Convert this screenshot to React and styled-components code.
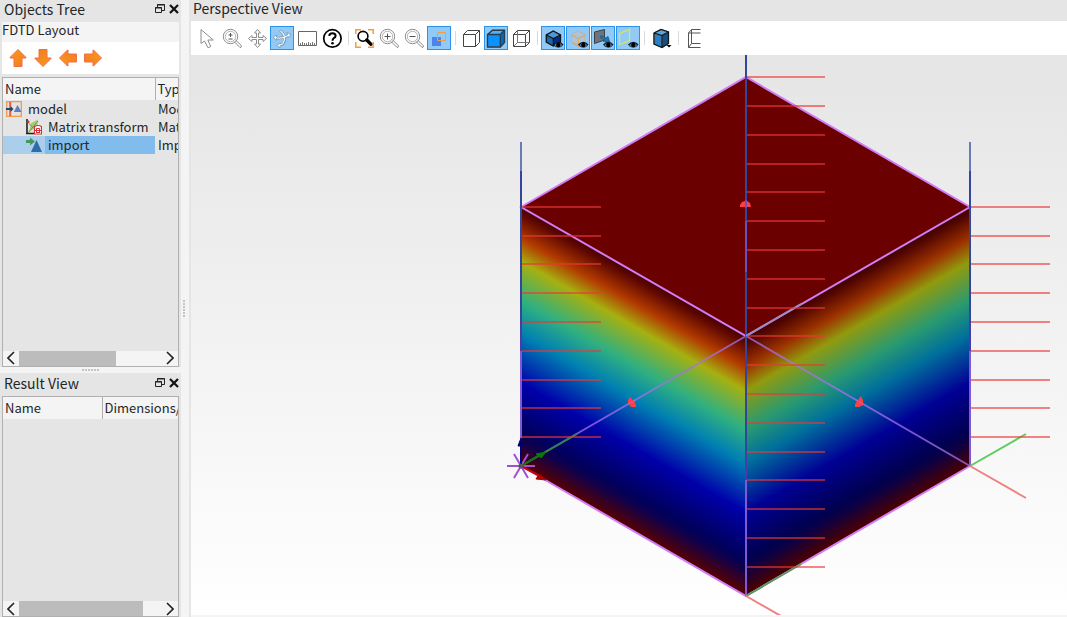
import { useState } from "react";
import styled, { createGlobalStyle } from "styled-components";

const GlobalStyle = createGlobalStyle`
    * {
        box-sizing: border-box;
    }
    body {
        margin: 0;
        background: #f4f4f4;
        color: #232627;
        font-family: "Noto Sans CJK SC", "Noto Sans", sans-serif;
        font-size: 13px;
    }
    button {
        font: inherit;
        color: inherit;
    }
`

/* ---------- icons ---------- */

const Arrow = ({ angle }) => (
    <svg width="20" height="20" viewBox="0 0 20 20">
        <path d="M10 1.5L18 9.5V10H14V18.5H6V10H2V9.5Z" fill="url(#orange)" stroke="#ee6f4c" strokeLinejoin="round" transform={`rotate(${angle} 10 10)`} />
    </svg>
)

const Icon = ({ children }) => (
    <svg width="24" height="24" viewBox="0 0 24 24" fill="none" stroke="#8c8c8c" strokeWidth="1">
        {children}
    </svg>
)

const Lens = ({ children }) => (
    <Icon>
        <circle cx="10.5" cy="10.5" r="7.2" />
        <circle cx="10.5" cy="10.5" r="5.2" stroke="#b4b4b4" />
        <path d="M15.5 14L21.3 19.5Q22 21.5 20 21.5L14 15.5" />
        {children}
    </Icon>
)

const Eye = () => (
    <g stroke="none">
        <path d="M12.5 19Q17.5 13.8 22 19Q17.5 23 12.5 19Z" fill="#5d8fb5" />
        <path d="M12.5 19Q17.5 13.8 22 19" stroke="#0b1620" strokeWidth="1.4" fill="none" />
        <path d="M13 19.5Q17.5 22.8 21.5 19.5" stroke="#1a3040" strokeWidth="1" fill="none" />
        <circle cx="17.3" cy="19" r="2.2" fill="#000" />
    </g>
)

const icons = {
    pointer: (
        <Icon><path d="M6 3.5V17.5L9.5 15L13 21.8L15.8 20.5L12.8 14H18.3Z" /></Icon>
    ),
    zoom: (
        <Lens><path d="M8.5 9H12.5M10.5 7V11M8.5 13H12.5" stroke="#555" /></Lens>
    ),
    pan: (
        <Icon>
            <path d="M12.5 3.5L15.5 7H13.5V11.5H18V9.5L21.5 12.5L18 15.5V13.5H13.5V18H15.5L12.5 21.5L9.5 18H11.5V13.5H7V15.5L3.5 12.5L7 9.5V11.5H11.5V7H9.5Z" />
        </Icon>
    ),
    rotate: (
        <Icon>
            <g fill="none" stroke="#8296a4" strokeWidth="2.6">
                <path d="M10 4.5Q18 11 13 18L9 19.5M4.5 11.5Q12 13.5 19 9" />
            </g>
            <path d="M10.5 17L6.5 19.5L10 21.8ZM17 6.5L21 8.5L18 12ZM6.5 8.8L3 11.3L6.5 14.2Z" fill="#eaf4fc" stroke="#8296a4" strokeWidth="0.8" />
            <g fill="none" stroke="#eaf4fc" strokeWidth="1.2">
                <path d="M10.4 4.8Q17.6 11 12.8 17.7L9 19.3M5 11.5Q12 13.4 18.6 9.2" />
            </g>
        </Icon>
    ),
    ruler: (
        <Icon>
            <path d="M3.5 5.5H21.5V19.5H3.5Z" stroke="#666" />
            <path d="M5.5 19V17M7.5 19V16M9.5 19V17M11.5 19V17M13.5 19V16M15.5 19V17M17.5 19V16M19.5 19V17" stroke="#777" />
        </Icon>
    ),
    help: (
        <Icon>
            <circle cx="12.4" cy="12.4" r="8.7" stroke="#000" strokeWidth="1.7" />
            <path d="M9.2 9.8Q9.4 7.2 12.4 7.2Q15.6 7.2 15.6 9.7Q15.6 11.2 13.8 12.2Q12.5 13 12.5 14.8" stroke="#000" strokeWidth="2" />
            <circle cx="12.5" cy="17.3" r="1.3" fill="#000" stroke="none" />
        </Icon>
    ),
    extent: (
        <Icon>
            <path d="M3.8 8V3.8H9M16 3.8H21.2V8M21.2 16V21.2H16M9 21.2H3.8V16" stroke="#f0a040" strokeWidth="1.5" />
            <circle cx="11" cy="10.3" r="4.9" stroke="#000" strokeWidth="1.6" />
            <path d="M14.8 14L18.8 18.2" stroke="#000" strokeWidth="3.4" strokeLinecap="round" />
        </Icon>
    ),
    zoomIn: (
        <Lens><path d="M7.5 10.5H13.5M10.5 7.5V13.5" stroke="#555" /></Lens>
    ),
    zoomOut: (
        <Lens><path d="M7.5 10.5H13.5" stroke="#555" /></Lens>
    ),
    overlap: (
        <Icon>
            <path d="M5 11H14V20H5Z" fill="#4d83ec" stroke="none" />
            <path d="M10.5 6.5H18.5V14.5H10.5Z" stroke="#eda045" />
        </Icon>
    ),
    boxHidden: (
        <Icon><path d="M4.5 8.5H16.5V20.5H4.5ZM4.5 8.5L8.5 4.5H20.5V16.5L16.5 20.5M16.5 8.5L20.5 4.5" stroke="#444" /></Icon>
    ),
    boxSolid: (
        <Icon>
            <path d="M3.5 8.5L8.5 4.3H20.5V16.5L16.3 21H3.5Z" fill="#0a93ff" />
            <path d="M16.3 8.5L20.5 4.3V16.5L16.3 21Z" fill="#076ab8" />
            <path d="M3.5 8.5L8.5 4.3H20.5L16.3 8.5Z" fill="#55aef0" />
            <path d="M3.5 8.5H16.3V21H3.5ZM3.5 8.5L8.5 4.3H20.5V16.5L16.3 21M16.3 8.5L20.5 4.3" stroke="#263f55" strokeWidth="1.4" />
        </Icon>
    ),
    boxWire: (
        <Icon>
            <path d="M4.5 8.5H16.5V20.5H4.5ZM4.5 8.5L8.5 4.5H20.5V16.5L16.5 20.5M16.5 8.5L20.5 4.5" stroke="#444" />
            <path d="M8.5 4.5V16.5H20.5M8.5 16.5L4.5 20.5" stroke="#777" />
        </Icon>
    ),
    showSolid: (
        <Icon>
            <path d="M12.3 5L19.5 9V16L12.3 20L5.3 16V9Z" fill="#1769ae" />
            <path d="M12.3 5L19.5 9L12.3 12.5L5.3 9Z" fill="#4a9ad8" />
            <path d="M19.5 9V16L12.3 20V12.5Z" fill="#062b86" />
            <path d="M12.3 5L19.5 9V16L12.3 20L5.3 16V9ZM5.3 9L12.3 12.5L19.5 9M12.3 12.5V20" stroke="#07131f" strokeWidth="1.3" />
            <Eye />
        </Icon>
    ),
    showMesh: (
        <Icon>
            <path d="M12.3 5L19 8.5V16L12.3 20L5.5 16V8.5Z" fill="#a9c6da" stroke="#ccb090" />
            <path d="M5.5 9L12.3 12.5L19 9M12.3 12.5V20L6 16.5" stroke="#e2a468" strokeWidth="1.2" />
            <Eye />
        </Icon>
    ),
    showSource: (
        <Icon>
            <path d="M3.5 6L13.5 3.5V14L3.5 17.5Z" fill="#6d757b" stroke="#3b4248" />
            <path d="M10 9.5L15 12L17 10.5L19 17L12.5 15.5L13.5 14L9 11.5Z" fill="#2374ae" stroke="#1c5b8d" strokeWidth="0.8" />
            <Eye />
        </Icon>
    ),
    showMonitor: (
        <Icon>
            <path d="M3.5 7.5L13.5 3.5V14.5L3.5 18.5Z" stroke="#dfe650" strokeWidth="1.3" />
            <Eye />
        </Icon>
    ),
    cube: (
        <Icon>
            <path d="M5 7L12 3.5L19.5 6V17.5L13 21.5L5 18Z" fill="#2f80c2" />
            <path d="M5 7L12 3.5L19.5 6L13 9.5Z" fill="#57a5da" />
            <path d="M13 9.5L19.5 6V17.5L13 21.5Z" fill="#174f80" />
            <path d="M5 7L12 3.5L19.5 6V17.5L13 21.5L5 18ZM5 7L13 9.5L19.5 6M13 9.5V21.5" stroke="#0b1722" strokeWidth="1.3" />
            <path d="M17.5 19H22.5L20 21.5Z" fill="#000" stroke="none" />
        </Icon>
    ),
    clip: (
        <Icon><path d="M18.5 3.5H9.5L6.5 7V21.5H18.5M9.5 3.5V17.5H18.5M6.5 7H18.5M6.5 21.5L9.5 17.5" stroke="#555" /></Icon>
    ),
}

const ModelIcon = () => (
    <svg width="16" height="16" viewBox="0 0 16 16">
        <path d="M.7.7H15.3V15.3H.7Z" fill="#e5e2df" stroke="#f09a52" strokeWidth="1.3" />
        <path d="M4.2 1V15" stroke="#ee5a3a" strokeWidth="2" />
        <path d="M0 8H6" stroke="#174a75" strokeWidth="2" />
        <path d="M4.5 5L7.5 8L4.5 11Z" fill="#174a75" />
        <path d="M11.5 4L15.5 11H7.8Z" fill="#5d7fc0" />
    </svg>
)

const MatrixIcon = () => (
    <svg width="16" height="16" viewBox="0 0 16 16" fill="none">
        <path d="M3 13L5 4L12 .5L11 8Z" fill="#a4cf75" />
        <path d="M1 0V15M0 14.5H8" stroke="#222" strokeWidth="1.6" />
        <path d="M1 2L7 9M2 14L12 2" stroke="#5a8c3a" strokeWidth="0.8" />
        <path d="M2 1L4 3L2 4Z" fill="#d82b2b" />
        <path d="M8.5 15V7.5Q12 5.5 15.5 7.5V15Z" fill="#fff" stroke="#d0323c" strokeWidth="1.2" />
        <path d="M10.5 14V9.5H13.5V14M8 11.5H15M10.5 13.5H13.5" stroke="#d0323c" />
    </svg>
)

const ImportIcon = () => (
    <svg width="16" height="16" viewBox="0 0 16 16">
        <path d="M10.5 3L16 15H5Z" fill="#2d6eaa" />
        <path d="M0 3H4V.5L9 4.5L4 8.5V6H0Z" fill="#459665" />
    </svg>
)

/* ---------- dock panels ---------- */

function PanelTitle({ title, tall }){
    return(
        <TitleBar $tall={tall}>
            <h2>{title}</h2>
            <TitleButton aria-label="Float">
                <svg width="10" height="10" viewBox="0 0 10 10" fill="none" stroke="#222">
                    <path d="M.5 3.5H6.5V8.5H.5ZM2.5 3V.5H9.5V6.5H7" />
                    <path d="M0 4H7M2 1H10" />
                </svg>
            </TitleButton>
            <TitleButton aria-label="Close">
                <svg width="10" height="10" viewBox="0 0 10 10" stroke="#111" strokeWidth="2.2">
                    <path d="M1 1L9 9M9 1L1 9" />
                </svg>
            </TitleButton>
        </TitleBar>
    )
}

function ScrollBar({ thumb }){
    return(
        <Scroll>
            <ScrollButton aria-label="Scroll left">
                <svg width="8" height="14" viewBox="0 0 8 14" fill="none" stroke="#222" strokeWidth="1.6"><path d="M7 1L1 7L7 13" /></svg>
            </ScrollButton>
            <Track><Thumb $size={thumb} /></Track>
            <ScrollButton aria-label="Scroll right">
                <svg width="8" height="14" viewBox="0 0 8 14" fill="none" stroke="#222" strokeWidth="1.6"><path d="M1 1L7 7L1 13" /></svg>
            </ScrollButton>
        </Scroll>
    )
}

const objects = [
    { name: "model", type: "Model", depth: 0, icon: <ModelIcon /> },
    { name: "Matrix transform", type: "Matrix transform", depth: 1, icon: <MatrixIcon /> },
    { name: "import", type: "Import", depth: 1, icon: <ImportIcon /> },
]

function ObjectsTree(){
    const [selected, setSelected] = useState("import");

    return(
        <Panel $grow={3}>
            <PanelTitle title="Objects Tree" />
            <Context>FDTD Layout</Context>
            <ArrowBar>
                <button aria-label="Move up"><Arrow angle={0} /></button>
                <button aria-label="Move down"><Arrow angle={180} /></button>
                <button aria-label="Move left"><Arrow angle={270} /></button>
                <button aria-label="Move right"><Arrow angle={90} /></button>
            </ArrowBar>
            <Frame>
                <TableArea>
                    <Table $first={152}>
                        <thead>
                            <tr><th>Name</th><th>Type</th></tr>
                        </thead>
                        <tbody>
                            {objects.map(item => (
                                <Row key={item.name} $selected={item.name === selected} onClick={() => setSelected(item.name)}>
                                    <td>
                                        <Cell>
                                            <Branch $depth={item.depth}>{item.icon}</Branch>
                                            <Label>{item.name}</Label>
                                        </Cell>
                                    </td>
                                    <td>{item.type}</td>
                                </Row>
                            ))}
                        </tbody>
                    </Table>
                </TableArea>
                <ScrollBar thumb={68} />
            </Frame>
        </Panel>
    )
}

function ResultView(){
    return(
        <Panel $grow={2}>
            <PanelTitle title="Result View" tall />
            <Frame>
                <TableArea>
                    <Table $first={99}>
                        <thead>
                            <tr><th>Name</th><th>Dimensions/value</th></tr>
                        </thead>
                    </Table>
                </TableArea>
                <ScrollBar thumb={87} />
            </Frame>
        </Panel>
    )
}

/* ---------- 3d view ---------- */

const tools = [
    ["pointer", "Select"],
    ["zoom", "Zoom"],
    ["pan", "Pan"],
    ["rotate", "Rotate", true],
    ["ruler", "Ruler"],
    ["help", "Help"],
    null,
    ["extent", "Zoom extent"],
    ["zoomIn", "Zoom in"],
    ["zoomOut", "Zoom out"],
    ["overlap", "Overlap", true],
    null,
    ["boxHidden", "Hidden line"],
    ["boxSolid", "Solid", true],
    ["boxWire", "Wireframe"],
    null,
    ["showSolid", "Show structures", true],
    ["showMesh", "Show simulation", true],
    ["showSource", "Show sources", true],
    ["showMonitor", "Show monitors", true],
    null,
    ["cube", "Orientation"],
    null,
    ["clip", "Clip"],
]

const sideTicks = [207, 236, 264, 293, 322, 351, 380, 408, 437];
const frontTicks = [77, 106, 135, 164, 192, 221, 250, 279, 308, 336, 365, 394, 423, 452, 480, 509, 538, 567];

const ramp = [
    [0, "#480000"], [0.03, "#600800"], [0.12, "#b23a00"], [0.21, "#a6b010"],
    [0.36, "#30b080"], [0.49, "#0080b2"], [0.68, "#0000aa"], [0.86, "#00005c"],
    [0.9, "#10004c"], [1, "#580000"],
];

function Scene(){
    return(
        <svg viewBox="191 55 876 560" role="img" aria-label="Perspective view" fill="none">
            <defs>
                <linearGradient id="ramp" x1="0" y1="0" x2="0" y2="1">
                    {ramp.map(([at, color]) => <stop key={at} offset={at} stopColor={color} />)}
                </linearGradient>
            </defs>

            <path d="M746 77L970 207L746 336L521 207Z" fill="#6b0000" />
            <g transform="matrix(1 .576 0 1 521 207)">
                <rect width="225" height="259" fill="url(#ramp)" />
            </g>
            <g transform="matrix(1 -.576 0 1 746 336)">
                <rect width="224" height="259" fill="url(#ramp)" />
                <rect width="224" height="259" fill="#000" opacity=".12" />
            </g>

            {/* box outline */}
            <g stroke="#cf7cf8" strokeWidth="2">
                <path d="M521 207L746 77L970 207L746 336Z" />
                <path d="M521 466L746 596L970 466" />
            </g>
            <g stroke="#a470e8" strokeWidth="2" opacity=".75">
                <path d="M746 336L521 466M746 336L970 466" />
            </g>
            <g stroke="#8058d4" strokeWidth="2">
                <path d="M521 351V466M746 480V596M970 351V466" />
            </g>

            {/* axes */}
            <g stroke="#6b7bb8" strokeWidth="2"><path d="M521 142V171M970 142V171" /></g>
            <g stroke="#34459c" strokeWidth="2">
                <path d="M521 171V322M970 171V322M746 55V221M746 272V451" />
            </g>
            <g stroke="#4b3aa8" strokeWidth="2"><path d="M521 322V351M970 322V351M746 451V480" /></g>
            <g stroke="#6650c8" strokeWidth="2"><path d="M746 221V272" /></g>
            <path d="M746 336L801 304" stroke="#9a8cc0" strokeWidth="2" />
            <path d="M746 596L801 564" stroke="#559a5c" strokeWidth="2" />
            <path d="M521 466L577 434" stroke="#2c8746" strokeWidth="2" />
            <path d="M970 466L1026 434" stroke="#5ccc5c" strokeWidth="2" />
            <path d="M970 466L1026 498M746 596L802 628" stroke="#f08080" strokeWidth="2" />

            {/* wave lines */}
            <g stroke="#eb3737" strokeWidth="2" opacity=".6">
                {sideTicks.map(y => <path key={y} d={`M522 ${y}H601M971 ${y}H1050`} />)}
                {frontTicks.map(y => <path key={y} d={`M747 ${y}H825`} />)}
            </g>

            {/* face markers */}
            <g fill="#ff4040">
                <path d="M740 207V205L742 202L745 201H747L750 203L751 207Z" />
                <path d="M630 397L632 399L634 401L636 405V407H631L628 403V400Z" />
                <path d="M861 396L863 400V405L859 407H855V404L858 400Z" />
            </g>
            <path d="M746 200V208" stroke="#6650c8" strokeWidth="2" />
            <path d="M628 404L636 400M856 400L863 404" stroke="#a470e8" strokeWidth="1" opacity=".7" />

            {/* origin */}
            <g stroke="#a24fd0" strokeWidth="2">
                <path d="M507 466H535M514 454L528 478M528 454L514 478" />
            </g>
            <path d="M521 466V444" stroke="#000080" strokeWidth="2" />
            <path d="M521 438L523 446H518Z" fill="#000068" stroke="#000068" />
            <path d="M521 466L538 456" stroke="#087808" strokeWidth="2" />
            <path d="M536 454L546 452L541 458Z" fill="#087808" stroke="#087808" />
            <path d="M521 466L538 475" stroke="#c00808" strokeWidth="2" />
            <path d="M539 474L546 480L536 479Z" fill="#b00000" stroke="#b00000" />
            <circle cx="521" cy="466" r="2.5" fill="#555" />
        </svg>
    )
}

function PerspectiveView(){
    return(
        <View>
            <ViewTitle>Perspective View</ViewTitle>
            <Toolbar>
                {tools.map((tool, i) => tool
                    ? <ToolButton key={i} aria-label={tool[1]} $active={tool[2]} $menu={tool[0] === "cube"}>{icons[tool[0]]}</ToolButton>
                    : <Separator key={i} />
                )}
            </Toolbar>
            <Canvas><Scene /></Canvas>
        </View>
    )
}

function App(){
    return(
        <>
            <GlobalStyle />
            <Window>
                <Gradients width="0" height="0" aria-hidden="true">
                    <linearGradient id="orange" x1="0" y1="0" x2="1" y2="1">
                        <stop offset="0" stopColor="#fa9a20" />
                        <stop offset="1" stopColor="#f27a1c" />
                    </linearGradient>
                </Gradients>
                <Docks>
                    <ObjectsTree />
                    <Splitter />
                    <ResultView />
                </Docks>
                <SideSplitter />
                <PerspectiveView />
            </Window>
        </>
    )
}

const Window = styled.div`
    display: flex;
    height: 100vh;
    overflow: hidden;
`
const Gradients = styled.svg`
    flex: none;
`
const Docks = styled.aside`
    display: flex;
    flex-direction: column;
    flex: 0 0 181px;
    min-width: 0;
`
const Panel = styled.section`
    display: flex;
    flex-direction: column;
    flex: ${p => p.$grow} 1 0;
    min-height: 0;
    padding: 0 2px;
    background: #e5e5e5;
`
const TitleBar = styled.header`
    display: flex;
    align-items: center;
    flex: none;
    gap: 4px;
    height: ${p => p.$tall ? 23 : 22}px;
    padding-bottom: ${p => p.$tall ? 2 : 5}px;

    h2{
        flex: 1;
        margin: 0;
        padding-left: 2px;
        font-size: 14px;
        font-weight: 400;
        line-height: 16px;
    }
`
const TitleButton = styled.button`
    display: flex;
    padding: 0;
    border: 0;
    background: none;
`
const Context = styled.div`
    flex: none;
    height: 20px;
    line-height: 16px;
    background: #f4f4f4;
`
const ArrowBar = styled.div`
    display: flex;
    align-items: center;
    flex: none;
    gap: 5px;
    height: 32px;
    margin-bottom: 3px;
    padding-left: 6px;
    background: #fff;

    button{
        display: flex;
        padding: 0;
        border: 0;
        background: none;
    }
`
const Frame = styled.div`
    display: flex;
    flex-direction: column;
    flex: 1;
    min-height: 0;
    border: 1px solid #b0b0b0;
`
const TableArea = styled.div`
    flex: 1;
    min-height: 0;
    overflow: hidden;
`
const Table = styled.table`
    width: 260px;
    table-layout: fixed;
    border-collapse: collapse;

    th{
        height: 22px;
        padding: 0 2px;
        background: #f4f4f4;
        font-weight: 400;
        line-height: 20px;
        text-align: left;
        white-space: nowrap;
    }
    th:first-child{
        width: ${p => p.$first}px;
        border-right: 1px solid #b0b0b0;
    }
    td{
        height: 18px;
        padding: 0 3px;
        line-height: 18px;
        white-space: nowrap;
    }
    td:first-child{
        padding: 0;
    }
`
const Cell = styled.div`
    display: flex;
    height: 18px;
`
const Branch = styled.span`
    display: flex;
    align-items: center;
    flex: none;
    width: ${p => 22 + p.$depth * 20}px;
    padding-left: ${p => 3 + p.$depth * 20}px;
`
const Label = styled.span`
    flex: 1;
    padding-left: 3px;
`
const Row = styled.tr`
    ${Branch}{
        background: ${p => p.$selected ? "#abceea" : "none"};
    }
    ${Label}{
        background: ${p => p.$selected ? "#82bcec" : "none"};
    }
`
const Scroll = styled.div`
    display: flex;
    flex: none;
    height: 15px;
    background: #f4f4f4;
`
const ScrollButton = styled.button`
    display: flex;
    align-items: center;
    justify-content: center;
    width: 16px;
    padding: 0;
    border: 0;
    background: none;
`
const Track = styled.div`
    flex: 1;
`
const Thumb = styled.div`
    width: ${p => p.$size}%;
    height: 100%;
    background: #bcbcbc;
`
const Splitter = styled.div`
    flex: none;
    width: 18px;
    height: 6px;
    margin: 0 auto;
    background: radial-gradient(circle at 1px 3px, #c4c4c4 1px, transparent 1px) 0 0 / 3px 6px;
`
const SideSplitter = styled.div`
    align-self: center;
    flex: none;
    width: 8px;
    height: 18px;
    background: radial-gradient(circle at 3px 1px, #c4c4c4 1px, transparent 1px) 0 0 / 8px 3px;
`
const View = styled.main`
    display: flex;
    flex-direction: column;
    flex: 1;
    min-width: 0;
    padding-bottom: 2px;
    border-left: 2px solid #e5e5e5;
`
const ViewTitle = styled.h2`
    flex: none;
    height: 21px;
    margin: 0;
    padding-left: 2px;
    background: #e5e5e5;
    font-size: 14px;
    font-weight: 400;
    line-height: 16px;
`
const Toolbar = styled.div`
    display: flex;
    align-items: center;
    flex: none;
    gap: 1px;
    height: 34px;
    padding-left: 4px;
    background: #fff;
`
const ToolButton = styled.button`
    display: flex;
    justify-content: center;
    width: ${p => p.$menu ? 26 : 24}px;
    height: 24px;
    padding: 0;
    border: 0;
    background: ${p => p.$active ? "#91c9f7" : "none"};
    box-shadow: ${p => p.$active ? "inset 0 0 0 1px #2a93ee" : "none"};
`
const Separator = styled.div`
    width: 6px;
    height: 14px;
    background: linear-gradient(#dadada, #dadada) center / 1px 100% no-repeat;
`
const Canvas = styled.div`
    flex: 1;
    min-height: 0;
    background: linear-gradient(#e5e5e5, #fff);

    svg{
        display: block;
        width: 100%;
        height: 100%;
    }
`

export default App;
